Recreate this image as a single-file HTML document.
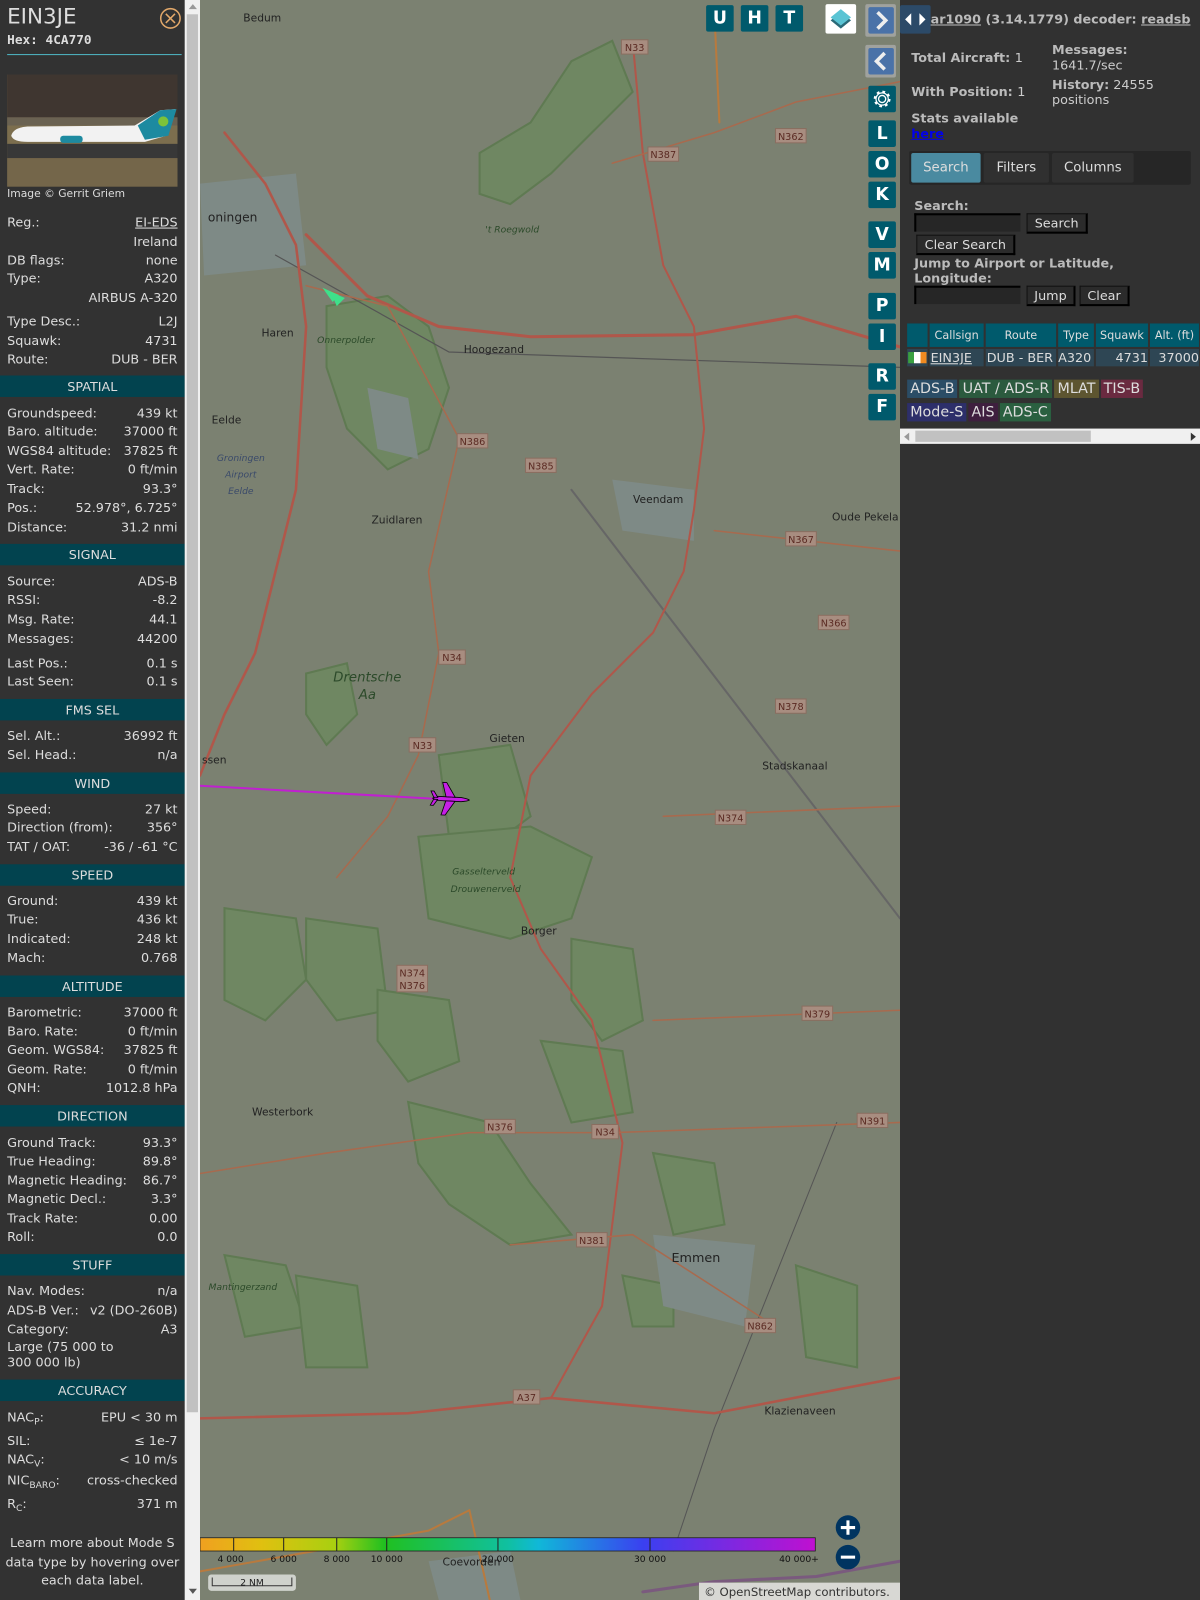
<!DOCTYPE html>
<html><head><meta charset="utf-8"><style>
*{margin:0;padding:0;box-sizing:border-box}
html,body{width:1200px;height:1600px;overflow:hidden;background:#313131}
#w{position:absolute;left:0;top:0;width:1176px;height:1568px;transform:scale(1.020408);transform-origin:0 0;font-family:"DejaVu Sans","Liberation Sans",sans-serif;color:#ddd;font-size:12.5px}
#lp{position:absolute;left:0;top:0;width:181px;height:1568px;background:#323232}
.r{position:absolute;left:7px;width:167px;height:18px;line-height:18px;display:flex;justify-content:space-between;white-space:nowrap}
.h{position:absolute;left:0;width:181px;height:21px;line-height:21px;background:#02434f;text-align:center;color:#ddd;font-size:12.5px}
#sb{position:absolute;left:181px;top:0;width:15px;height:1568px;background:#f0f0f0}
#map{position:absolute;left:196px;top:0;width:686px;height:1568px;background:#7b8171;overflow:hidden}
#rp{position:absolute;left:882px;top:0;width:294px;height:1568px;background:#313131}
.mb{position:absolute;width:27px;height:26px;background:#005a6c;color:#fff;font-weight:bold;font-size:17px;text-align:center;line-height:26px;border-radius:2px}
.bd{display:inline-block;padding:0 3px;height:18px;line-height:18px;font-size:14px;margin-right:2px}
.btn{position:absolute;background:#2b2b2b;border:1px solid #111;border-right:2px solid #000;border-bottom:2px solid #000;color:#ddd;font-size:12.5px;text-align:center}
.inp{position:absolute;background:#262626;border-top:2px solid #000;border-left:2px solid #000}
sub{font-size:9px;vertical-align:-3px}
</style></head><body><div id="w">
<div id="lp">
<div style="position:absolute;left:7px;top:4px;font-size:21px;color:#ddd">EIN3JE</div>
<div style="position:absolute;left:7px;top:31px;font-family:'DejaVu Sans Mono','Liberation Mono',monospace;font-weight:bold;font-size:12.5px">Hex: 4CA770</div>
<svg style="position:absolute;left:156px;top:7px" width="22" height="22"><circle cx="11" cy="11" r="9.5" fill="none" stroke="#e2a86a" stroke-width="1.5"/><path d="M6.5 6.5L15.5 15.5M15.5 6.5L6.5 15.5" stroke="#e2a86a" stroke-width="1.5"/></svg>
<div style="position:absolute;left:7px;top:53px;width:171px;height:1px;background:#4fb7c5"></div>
<svg style="position:absolute;left:7px;top:73px" width="167" height="110" viewBox="0 0 167 110">
<rect width="167" height="110" fill="#6e6245"/><rect y="0" width="167" height="42" fill="#3f3630"/>
<rect y="42" width="167" height="8" fill="#6a6252"/><rect y="50" width="167" height="18" fill="#7c6e4e"/>
<rect y="68" width="167" height="14" fill="#383838"/><rect y="82" width="167" height="28" fill="#74664a"/>
<path d="M4 60Q6 52 20 51L125 50L150 35L165 34L156 60L135 66L20 66Q6 66 4 60Z" fill="#f2f2f2"/>
<path d="M128 50L150 35L166 34L158 60L135 64Z" fill="#1d8aa0"/><circle cx="153" cy="46" r="5" fill="#7cc23a"/>
<rect x="52" y="60" width="22" height="7" rx="3" fill="#1d8aa0"/>
</svg>
<div style="position:absolute;left:7px;top:184px;font-size:10.5px">Image © Gerrit Griem</div>
<div class="r" style="top:209px"><span>Reg.:</span><span style="text-decoration:underline">EI-EDS</span></div>
<div class="r" style="top:228px"><span></span><span>Ireland</span></div>
<div class="r" style="top:246px"><span>DB flags:</span><span>none</span></div>
<div class="r" style="top:264px"><span>Type:</span><span>A320</span></div>
<div class="r" style="top:283px"><span></span><span>AIRBUS A-320</span></div>
<div class="r" style="top:306px"><span>Type Desc.:</span><span>L2J</span></div>
<div class="r" style="top:325px"><span>Squawk:</span><span>4731</span></div>
<div class="r" style="top:343px"><span>Route:</span><span>DUB - BER</span></div>
<div class="h" style="top:368px">SPATIAL</div>
<div class="r" style="top:396px"><span>Groundspeed:</span><span>439 kt</span></div>
<div class="r" style="top:414px"><span>Baro. altitude:</span><span>37000 ft</span></div>
<div class="r" style="top:433px"><span>WGS84 altitude:</span><span>37825 ft</span></div>
<div class="r" style="top:451px"><span>Vert. Rate:</span><span>0 ft/min</span></div>
<div class="r" style="top:470px"><span>Track:</span><span>93.3°</span></div>
<div class="r" style="top:489px"><span>Pos.:</span><span>52.978°, 6.725°</span></div>
<div class="r" style="top:508px"><span>Distance:</span><span>31.2 nmi</span></div>
<div class="h" style="top:533px">SIGNAL</div>
<div class="r" style="top:561px"><span>Source:</span><span>ADS-B</span></div>
<div class="r" style="top:579px"><span>RSSI:</span><span>-8.2</span></div>
<div class="r" style="top:598px"><span>Msg. Rate:</span><span>44.1</span></div>
<div class="r" style="top:617px"><span>Messages:</span><span>44200</span></div>
<div class="r" style="top:641px"><span>Last Pos.:</span><span>0.1 s</span></div>
<div class="r" style="top:659px"><span>Last Seen:</span><span>0.1 s</span></div>
<div class="h" style="top:685px">FMS SEL</div>
<div class="r" style="top:712px"><span>Sel. Alt.:</span><span>36992 ft</span></div>
<div class="r" style="top:731px"><span>Sel. Head.:</span><span>n/a</span></div>
<div class="h" style="top:757px">WIND</div>
<div class="r" style="top:784px"><span>Speed:</span><span>27 kt</span></div>
<div class="r" style="top:802px"><span>Direction (from):</span><span>356°</span></div>
<div class="r" style="top:821px"><span>TAT / OAT:</span><span>-36 / -61 °C</span></div>
<div class="h" style="top:847px">SPEED</div>
<div class="r" style="top:874px"><span>Ground:</span><span>439 kt</span></div>
<div class="r" style="top:892px"><span>True:</span><span>436 kt</span></div>
<div class="r" style="top:911px"><span>Indicated:</span><span>248 kt</span></div>
<div class="r" style="top:930px"><span>Mach:</span><span>0.768</span></div>
<div class="h" style="top:956px">ALTITUDE</div>
<div class="r" style="top:983px"><span>Barometric:</span><span>37000 ft</span></div>
<div class="r" style="top:1002px"><span>Baro. Rate:</span><span>0 ft/min</span></div>
<div class="r" style="top:1020px"><span>Geom. WGS84:</span><span>37825 ft</span></div>
<div class="r" style="top:1039px"><span>Geom. Rate:</span><span>0 ft/min</span></div>
<div class="r" style="top:1057px"><span>QNH:</span><span>1012.8 hPa</span></div>
<div class="h" style="top:1083px">DIRECTION</div>
<div class="r" style="top:1111px"><span>Ground Track:</span><span>93.3°</span></div>
<div class="r" style="top:1129px"><span>True Heading:</span><span>89.8°</span></div>
<div class="r" style="top:1148px"><span>Magnetic Heading:</span><span>86.7°</span></div>
<div class="r" style="top:1166px"><span>Magnetic Decl.:</span><span>3.3°</span></div>
<div class="r" style="top:1185px"><span>Track Rate:</span><span>0.00</span></div>
<div class="r" style="top:1203px"><span>Roll:</span><span>0.0</span></div>
<div class="h" style="top:1229px">STUFF</div>
<div class="r" style="top:1256px"><span>Nav. Modes:</span><span>n/a</span></div>
<div class="r" style="top:1275px"><span>ADS-B Ver.:</span><span>v2 (DO-260B)</span></div>
<div class="r" style="top:1294px"><span>Category:</span><span>A3</span></div>
<div style="position:absolute;left:7px;top:1312px;line-height:15px">Large (75 000 to<br>300 000 lb)</div>
<div class="h" style="top:1352px">ACCURACY</div>
<div class="r" style="top:1380px"><span>NAC<sub>P</sub>:</span><span>EPU &lt; 30 m</span></div>
<div class="r" style="top:1403px"><span>SIL:</span><span>≤ 1e-7</span></div>
<div class="r" style="top:1421px"><span>NAC<sub>V</sub>:</span><span>&lt; 10 m/s</span></div>
<div class="r" style="top:1442px"><span>NIC<sub>BARO</sub>:</span><span>cross-checked</span></div>
<div class="r" style="top:1465px"><span>R<sub>C</sub>:</span><span>371 m</span></div>
<div style="position:absolute;left:0;width:181px;top:1503px;text-align:center;line-height:18.5px">Learn more about Mode S data type by hovering over each data label.</div>
</div>
<div id="sb"><div style="position:absolute;left:2px;top:14px;width:11px;height:1370px;background:#c1c1c1"></div>
<div style="position:absolute;left:4px;top:4px;border:4px solid transparent;border-bottom:5px solid #999;border-top:0"></div>
<div style="position:absolute;left:4px;top:1557px;border:4px solid transparent;border-top:5px solid #555;border-bottom:0"></div></div>

<div id="map">
<svg width="686" height="1568" viewBox="196 0 686 1568" style="position:absolute;left:0;top:0" font-family="DejaVu Sans,sans-serif">
<g fill="#6f8762" stroke="#5f7a52" stroke-width="2">
<path d="M470 150L520 120L560 60L600 40L620 90L580 130L540 170L500 200L470 190Z"/>
<path d="M320 300L380 290L420 320L440 380L420 440L380 460L340 420L320 360Z"/>
<path d="M300 660L340 650L350 700L320 730L300 700Z"/>
<path d="M430 740L500 730L520 800L480 830L440 820Z"/>
<path d="M410 820L520 810L580 840L560 900L500 920L420 900Z"/>
<path d="M220 890L290 900L300 960L260 1000L220 980Z"/>
<path d="M300 900L370 910L380 990L330 1000L300 960Z"/>
<path d="M370 970L440 980L450 1040L400 1060L370 1020Z"/>
<path d="M560 920L620 930L630 1000L590 1020L560 980Z"/>
<path d="M530 1020L610 1030L620 1090L560 1100Z"/>
<path d="M400 1080L480 1100L520 1160L560 1210L500 1220L440 1180L410 1140Z"/>
<path d="M640 1130L700 1140L710 1200L660 1210Z"/>
<path d="M220 1230L280 1240L300 1300L240 1310Z"/>
<path d="M290 1250L350 1260L360 1340L300 1340Z"/>
<path d="M780 1240L840 1260L840 1340L790 1330Z"/>
<path d="M610 1250L660 1260L660 1300L620 1300Z"/>
</g>
<g fill="#7e8a86"><path d="M360 380L400 390L410 450L370 440Z"/><path d="M600 470L680 480L680 530L610 520Z"/><path d="M640 1210L740 1220L730 1300L650 1280Z"/><path d="M196 180L290 170L300 260L200 270Z"/><path d="M420 1530L500 1520L510 1568L430 1568Z"/></g>
<g fill="none" stroke-linecap="round">
<path d="M270 250L440 345L882 360" stroke="#555" stroke-width="1.2"/>
<path d="M560 480L882 900" stroke="#666" stroke-width="2"/>
<path d="M660 1520L700 1400L740 1300L780 1200L820 1100" stroke="#555" stroke-width="1"/>
<path d="M300 230L360 290L430 320L520 330L680 328L780 310L882 340" stroke="#b0574a" stroke-width="3"/>
<path d="M220 130L260 180L290 240L300 320L290 480L270 560L250 640L220 700L196 760" stroke="#b0574a" stroke-width="2.5"/>
<path d="M620 40L630 150L650 260L680 320L690 420L680 500L670 560L640 620L580 680L520 760L500 860L530 930L580 1000L610 1120L600 1200L590 1280L540 1370" stroke="#b0574a" stroke-width="2"/>
<path d="M300 280L380 300L450 430L420 560L430 640L410 740L380 800L330 860" stroke="#a86a4e" stroke-width="1.5"/>
<path d="M196 1390L400 1385L540 1370L700 1385L882 1350" stroke="#b0574a" stroke-width="2.5"/>
<path d="M600 160L700 130L780 100L882 80" stroke="#a86a4e" stroke-width="1.5"/>
<path d="M700 520L882 540" stroke="#a86a4e" stroke-width="1.5"/>
<path d="M650 800L882 790" stroke="#a86a4e" stroke-width="1.5"/>
<path d="M640 1000L882 990" stroke="#a86a4e" stroke-width="1.5"/>
<path d="M196 1150L320 1130L460 1110L600 1110L882 1100" stroke="#a86a4e" stroke-width="1.5"/>
<path d="M500 1220L620 1210L760 1300" stroke="#a86a4e" stroke-width="1.5"/>
<path d="M700 10L705 120" stroke="#b87a3e" stroke-width="2"/>
<path d="M196 1540L420 1500L460 1480L480 1568" stroke="#b87a3e" stroke-width="2"/>
<path d="M630 1560L700 1550L800 1545L882 1530" stroke="#7a5a7e" stroke-width="3"/>
</g>
<g font-size="10.5" fill="#222" text-anchor="middle">
<text x="257" y="21">Bedum</text><text x="228" y="217" font-size="12">oningen</text><text x="272" y="330">Haren</text>
<text x="484" y="346">Hoogezand</text><text x="222" y="415">Eelde</text><text x="389" y="513">Zuidlaren</text>
<text x="645" y="493">Veendam</text><text x="848" y="510">Oude Pekela</text><text x="497" y="727">Gieten</text>
<text x="779" y="754">Stadskanaal</text><text x="210" y="748">ssen</text><text x="528" y="916">Borger</text>
<text x="277" y="1093">Westerbork</text><text x="682" y="1237" font-size="12.5">Emmen</text><text x="784" y="1386">Klazienaveen</text>
<text x="462" y="1534">Coevorden</text>
</g>
<g font-size="9" fill="#2c4a2a" font-style="italic" text-anchor="middle">
<text x="360" y="668" font-size="13">Drentsche</text><text x="360" y="685" font-size="13">Aa</text>
<text x="474" y="857">Gasselterveld</text><text x="476" y="874">Drouwenerveld</text><text x="339" y="336">Onnerpolder</text>
<text x="236" y="452" fill="#3a4a6a">Groningen</text><text x="236" y="468" fill="#3a4a6a">Airport</text><text x="236" y="484" fill="#3a4a6a">Eelde</text>
<text x="238" y="1264">Mantingerzand</text><text x="502" y="228">'t Roegwold</text>
</g>
<g font-size="9.5" fill="#5a2a22" text-anchor="middle">
<g fill="#a88d80" stroke="#8a6e60"><rect x="609" y="39" width="26" height="14"/><rect x="760" y="126" width="30" height="14"/><rect x="635" y="144" width="30" height="14"/><rect x="448" y="425" width="30" height="14"/><rect x="515" y="449" width="30" height="14"/><rect x="770" y="521" width="30" height="14"/><rect x="802" y="603" width="30" height="14"/><rect x="430" y="637" width="26" height="14"/><rect x="760" y="685" width="30" height="14"/><rect x="401" y="723" width="26" height="14"/><rect x="701" y="794" width="30" height="14"/><rect x="389" y="946" width="30" height="26"/><rect x="786" y="986" width="30" height="14"/><rect x="475" y="1097" width="30" height="14"/><rect x="580" y="1102" width="26" height="14"/><rect x="840" y="1091" width="30" height="14"/><rect x="565" y="1208" width="30" height="14"/><rect x="730" y="1292" width="30" height="14"/><rect x="503" y="1362" width="26" height="14"/></g>
<text x="622" y="50">N33</text><text x="775" y="137">N362</text><text x="650" y="155">N387</text><text x="463" y="436">N386</text><text x="530" y="460">N385</text><text x="785" y="532">N367</text><text x="817" y="614">N366</text><text x="443" y="648">N34</text><text x="775" y="696">N378</text><text x="414" y="734">N33</text><text x="716" y="805">N374</text><text x="404" y="957">N374</text><text x="404" y="969">N376</text><text x="801" y="997">N379</text><text x="490" y="1108">N376</text><text x="593" y="1113">N34</text><text x="855" y="1102">N391</text><text x="580" y="1219">N381</text><text x="745" y="1303">N862</text><text x="516" y="1373">A37</text>
</g>
<path d="M196 770L430 783" stroke="#c020d0" stroke-width="2"/>
<g transform="translate(440 783) rotate(3)" fill="#c61fe6" stroke="#000" stroke-width="0.8">
<path d="M-16 0L-12 -2L12 -2Q19 -1 20 0Q19 1 12 2L-12 2Z"/><path d="M-3 -2L-7 -16L-3 -16L6 -2Z"/><path d="M-3 2L-7 16L-3 16L6 2Z"/><path d="M-15 -1L-18 -7L-15 -7L-11 -1Z"/><path d="M-15 1L-18 7L-15 7L-11 1Z"/></g>
<path d="M316 282L332 289L326 296Z" fill="#3ee08a"/><path d="M324 286L338 292L330 300Z" fill="#3ee08a"/>
<defs><linearGradient id="g" x1="0" x2="1"><stop offset="0" stop-color="#f0a020"/><stop offset=".1" stop-color="#e0c010"/><stop offset=".22" stop-color="#a8d010"/><stop offset=".3" stop-color="#20c020"/><stop offset=".5" stop-color="#10c0a0"/><stop offset=".55" stop-color="#10b8d8"/><stop offset=".72" stop-color="#3a40f0"/><stop offset="1" stop-color="#c010d0"/></linearGradient></defs>
<rect x="196" y="1507" width="603" height="13" fill="url(#g)" stroke="#222" stroke-width="0.8"/>
<g stroke="#222"><path d="M229 1507v13M278 1507v13M330 1507v13M379 1507v13M488 1507v13M637 1507v13"/></g>
<g font-size="9" fill="#111" text-anchor="middle"><text x="226" y="1531">4 000</text><text x="278" y="1531">6 000</text><text x="330" y="1531">8 000</text><text x="379" y="1531">10 000</text><text x="488" y="1531">20 000</text><text x="637" y="1531">30 000</text><text x="783" y="1531">40 000+</text></g>
<rect x="204" y="1543" width="86" height="16" rx="3" fill="#d8dad6" opacity=".9"/><path d="M208 1546v8h78v-8" fill="none" stroke="#333"/><text x="247" y="1554" font-size="9" text-anchor="middle" fill="#222">2 NM</text>
<circle cx="831" cy="1497" r="12" fill="#003460"/><path d="M824 1497h14M831 1490v14" stroke="#fff" stroke-width="3"/>
<circle cx="831" cy="1526" r="12" fill="#003460"/><path d="M824 1526h14" stroke="#fff" stroke-width="3"/>
<rect x="685" y="1551" width="197" height="17" fill="#d8d8d4"/><text x="690" y="1564" font-size="11.5" fill="#333">© OpenStreetMap contributors.</text>
</svg>
<div class="mb" style="left:496px;top:5px">U</div><div class="mb" style="left:530px;top:5px">H</div><div class="mb" style="left:564px;top:5px">T</div>
<div style="position:absolute;left:613px;top:4px;width:30px;height:29px;background:#fff;border-radius:2px"><svg width="30" height="29"><path d="M15 8L25 16L15 24L5 16Z" fill="#2a6a78"/><path d="M15 5L25 13L15 21L5 13Z" fill="#5ac4d4"/></svg></div>
<div style="position:absolute;left:652px;top:4px;width:30px;height:32px;background:#aaa;opacity:.8;border-radius:2px"></div>
<div style="position:absolute;left:655px;top:7px;width:25px;height:26px;background:#4a72a8;border-radius:2px"><svg width="25" height="26"><path d="M9 5L17 13L9 21" fill="none" stroke="#eee" stroke-width="3.5"/></svg></div>
<div style="position:absolute;left:652px;top:44px;width:30px;height:32px;background:#aaa;opacity:.8;border-radius:2px"></div>
<div style="position:absolute;left:655px;top:47px;width:25px;height:26px;background:#4a72a8;border-radius:2px"><svg width="25" height="26"><path d="M16 5L8 13L16 21" fill="none" stroke="#eee" stroke-width="3.5"/></svg></div>
<div class="mb" style="left:655px;top:84px"><svg width="27" height="26"><circle cx="13.5" cy="13" r="3.5" fill="none" stroke="#fff" stroke-width="1.3"/><circle cx="13.5" cy="13" r="7" fill="none" stroke="#fff" stroke-width="2.5" stroke-dasharray="2.6 2.9"/><circle cx="13.5" cy="13" r="6" fill="none" stroke="#fff" stroke-width="1.2"/></svg></div>
<div class="mb" style="left:655px;top:118px">L</div><div class="mb" style="left:655px;top:148px">O</div><div class="mb" style="left:655px;top:178px">K</div>
<div class="mb" style="left:655px;top:217px">V</div><div class="mb" style="left:655px;top:247px">M</div>
<div class="mb" style="left:655px;top:287px">P</div><div class="mb" style="left:655px;top:317px">I</div>
<div class="mb" style="left:655px;top:356px">R</div><div class="mb" style="left:655px;top:386px">F</div>
</div>

<div id="rp">
<div style="position:absolute;left:0;top:5px;width:30px;height:28px;background:#2c4a68;border-radius:2px"><svg width="30" height="28"><path d="M5 14L11 8V20Z M25 14L19 8V20Z" fill="#fff"/></svg></div>
<div style="position:absolute;left:30px;top:11px;font-weight:bold;font-size:12.5px;color:#bbb;white-space:nowrap"><u>ar1090</u> (3.14.1779) decoder: <u>readsb</u></div>
<div style="position:absolute;left:11px;top:49px;font-weight:bold;color:#bbb;font-size:12.5px">Total Aircraft: <span style="font-weight:normal;color:#ccc">1</span></div>
<div style="position:absolute;left:11px;top:82px;font-weight:bold;color:#bbb">With Position: <span style="font-weight:normal;color:#ccc">1</span></div>
<div style="position:absolute;left:149px;top:41px;line-height:15px;color:#ccc"><b style="color:#bbb">Messages:</b><br>1641.7/sec</div>
<div style="position:absolute;left:149px;top:75px;line-height:15px;color:#ccc"><b style="color:#bbb">History:</b> 24555<br>positions</div>
<div style="position:absolute;left:11px;top:108px;line-height:15px;font-weight:bold;color:#bbb">Stats available<br><u style="color:#00e">here</u></div>
<div style="position:absolute;left:9px;top:148px;width:276px;height:33px;background:#262626;border-radius:2px"></div>
<div style="position:absolute;left:11px;top:150px;width:68px;height:29px;background:#4a8aa0;color:#ddd;text-align:center;line-height:29px;font-size:13px;border-radius:2px">Search</div>
<div style="position:absolute;left:82px;top:150px;width:64px;height:29px;background:#303030;text-align:center;line-height:29px;font-size:13px;border-radius:2px">Filters</div>
<div style="position:absolute;left:149px;top:150px;width:80px;height:29px;background:#303030;text-align:center;line-height:29px;font-size:13px;border-radius:2px">Columns</div>
<div style="position:absolute;left:14px;top:194px;font-weight:bold;color:#bbb">Search:</div>
<div class="inp" style="left:14px;top:209px;width:104px;height:18px"></div>
<div class="btn" style="left:124px;top:209px;width:60px;height:20px;line-height:17px">Search</div>
<div class="btn" style="left:16px;top:230px;width:97px;height:20px;line-height:17px">Clear Search</div>
<div style="position:absolute;left:14px;top:250px;font-weight:bold;color:#bbb;line-height:15px">Jump to Airport or Latitude,<br>Longitude:</div>
<div class="inp" style="left:14px;top:280px;width:104px;height:18px"></div>
<div class="btn" style="left:124px;top:280px;width:48px;height:20px;line-height:17px">Jump</div>
<div class="btn" style="left:176px;top:280px;width:49px;height:20px;line-height:17px">Clear</div>
<div style="position:absolute;left:7px;top:317px;width:287px;height:43px;font-size:11px">
<div style="position:absolute;top:0;height:23px;left:0;width:20px;background:#005a6c"></div>
<div style="position:absolute;top:0;height:23px;left:22px;width:53px;background:#005a6c;text-align:center;line-height:23px">Callsign</div>
<div style="position:absolute;top:0;height:23px;left:77px;width:69px;background:#005a6c;text-align:center;line-height:23px">Route</div>
<div style="position:absolute;top:0;height:23px;left:148px;width:35px;background:#005a6c;text-align:center;line-height:23px">Type</div>
<div style="position:absolute;top:0;height:23px;left:185px;width:51px;background:#005a6c;text-align:center;line-height:23px">Squawk</div>
<div style="position:absolute;top:0;height:23px;left:238px;width:48px;background:#005a6c;text-align:center;line-height:23px">Alt. (ft)</div>
<div style="position:absolute;top:25px;height:17px;left:0;width:20px;background:#2e4654"><div style="margin:3px 1px;width:18px;height:11px;background:linear-gradient(90deg,#3aa040 33%,#fff 33% 66%,#f08a20 66%)"></div></div>
<div style="position:absolute;top:25px;height:17px;left:22px;width:53px;background:#2e4654;line-height:17px;font-size:12.5px;padding-left:1px"><u>EIN3JE</u></div>
<div style="position:absolute;top:25px;height:17px;left:77px;width:69px;background:#2e4654;line-height:17px;font-size:12.5px;padding-left:1px;white-space:nowrap">DUB - BER</div>
<div style="position:absolute;top:25px;height:17px;left:148px;width:35px;background:#2e4654;line-height:17px;font-size:12.5px">A320</div>
<div style="position:absolute;top:25px;height:17px;left:185px;width:51px;background:#2e4654;line-height:17px;font-size:12.5px;text-align:right">4731</div>
<div style="position:absolute;top:25px;height:17px;left:238px;width:48px;background:#2e4654;line-height:17px;font-size:12.5px;text-align:right">37000</div>
</div>
<div style="position:absolute;left:7px;top:372px;white-space:nowrap"><span class="bd" style="background:#2b4d66">ADS-B</span><span class="bd" style="background:#2b5a3e">UAT / ADS-R</span><span class="bd" style="background:#5d5530">MLAT</span><span class="bd" style="background:#6a2a40">TIS-B</span></div>
<div style="position:absolute;left:7px;top:395px;white-space:nowrap"><span class="bd" style="background:#2d2f6a">Mode-S</span><span class="bd" style="background:#3e1f3e">AIS</span><span class="bd" style="background:#2a6040">ADS-C</span></div>
<div style="position:absolute;left:0;top:420px;width:294px;height:15px;background:#f0f0f0"><div style="position:absolute;left:15px;top:2px;width:172px;height:11px;background:#c1c1c1"></div>
<div style="position:absolute;left:4px;top:4px;border:4px solid transparent;border-right:5px solid #999;border-left:0"></div><div style="position:absolute;right:4px;top:4px;border:4px solid transparent;border-left:5px solid #333;border-right:0"></div></div>
</div>
</div></body></html>
